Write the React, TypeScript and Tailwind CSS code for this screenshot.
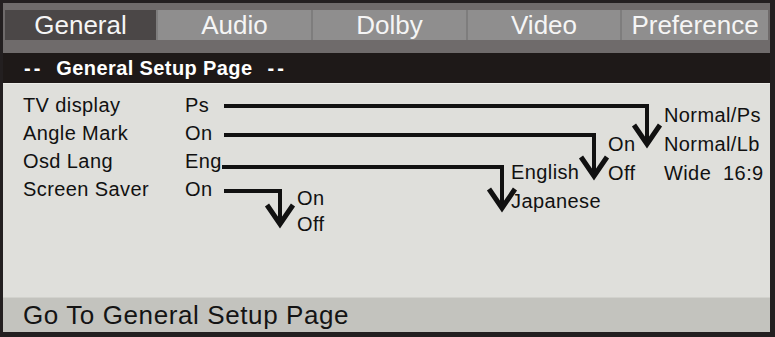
const tabs = [
  { label: "General", w: "w-[151px]", active: true },
  { label: "Audio", w: "w-[155px]", active: false },
  { label: "Dolby", w: "w-[155px]", active: false },
  { label: "Video", w: "w-[154px]", active: false },
  { label: "Preference", w: "flex-1", active: false },
];

const rows = [
  { label: "TV display", value: "Ps" },
  { label: "Angle Mark", value: "On" },
  { label: "Osd Lang", value: "Eng" },
  { label: "Screen Saver", value: "On" },
];

// connector lines, coords relative to the content panel (page x - 3, y - 83)
const links = [
  { y: 22, x0: 221, x: 644, tip: 60 },
  { y: 51, x0: 221, x: 591, tip: 92 },
  { y: 83, x0: 219, x: 499, tip: 124 },
  { y: 107, x0: 221, x: 277, tip: 140 },
];

function Connectors() {
  return (
    <svg className="pointer-events-none absolute left-0 top-0" width="767" height="214">
      {links.map((l, i) => (
        <g key={i} fill="none" stroke="#111">
          <path d={`M${l.x0} ${l.y} H${l.x} V${l.tip - 3}`} strokeWidth={4} strokeLinejoin="miter" />
          <path d={`M${l.x - 13} ${l.tip - 19} L${l.x} ${l.tip} L${l.x + 13} ${l.tip - 19}`} strokeWidth={5} strokeLinejoin="miter" />
        </g>
      ))}
    </svg>
  );
}

export default function App() {
  return (
    <div
      className="flex h-[337px] w-[775px] flex-col bg-[#231f20] pb-[5px] pl-[3px] pr-[5px] pt-[3px]"
      style={{ fontFamily: '"Liberation Sans", Arial, sans-serif' }}
    >
      <div className="bg-[#6f6b6b] px-[2px] pb-[13px] pt-[7px]">
        <div className="flex h-[30px]">
          {tabs.map((t, i) => (
            <div
              key={t.label}
              className={`${t.w} flex items-center justify-center text-[26px] leading-[30px] text-[#f5f5f5] ${
                t.active ? "bg-[#4b4747]" : "bg-[#8f8e8e]"
              } ${i > 0 ? "border-l-2 border-[#7e7d7d]" : ""}`}
            >
              {t.label}
            </div>
          ))}
        </div>
      </div>

      <div className="flex h-[30px] items-center bg-[#1e1918] pl-[21px] text-[20px] font-bold tracking-[0.4px] text-white">
        <span className="tracking-[3px]">--</span>
        <span className="ml-[13px]">General Setup Page</span>
        <span className="ml-[15px] tracking-[3px]">--</span>
      </div>

      <div className="relative flex-1 border-t border-[#ecece8] bg-[#dfdfdb] pt-[7px] text-[20px] leading-[28px] tracking-[0.4px] text-[#111]">
        {rows.map((r) => (
          <div key={r.label} className="flex pl-[20px]">
            <span className="w-[162px]">{r.label}</span>
            <span>{r.value}</span>
          </div>
        ))}

        <Connectors />

        <div className="absolute left-[661px] top-[17px] whitespace-pre leading-[29px]">
          <div>Normal/Ps</div>
          <div>Normal/Lb</div>
          <div>{"Wide  16:9"}</div>
        </div>
        <div className="absolute left-[605px] top-[46px] leading-[29px]">
          <div>On</div>
          <div>Off</div>
        </div>
        <div className="absolute left-[508px] top-[74px] leading-[29px]">
          <div>English</div>
          <div>Japanese</div>
        </div>
        <div className="absolute left-[294px] top-[101px] leading-[26px]">
          <div>On</div>
          <div>Off</div>
        </div>
      </div>

      <div className="flex h-[35px] items-center border-t border-[#d2d2cd] bg-[#c3c3be] pl-[20px] text-[26px] tracking-[0.6px] text-[#141414]">
        Go To General Setup Page
      </div>
    </div>
  );
}
